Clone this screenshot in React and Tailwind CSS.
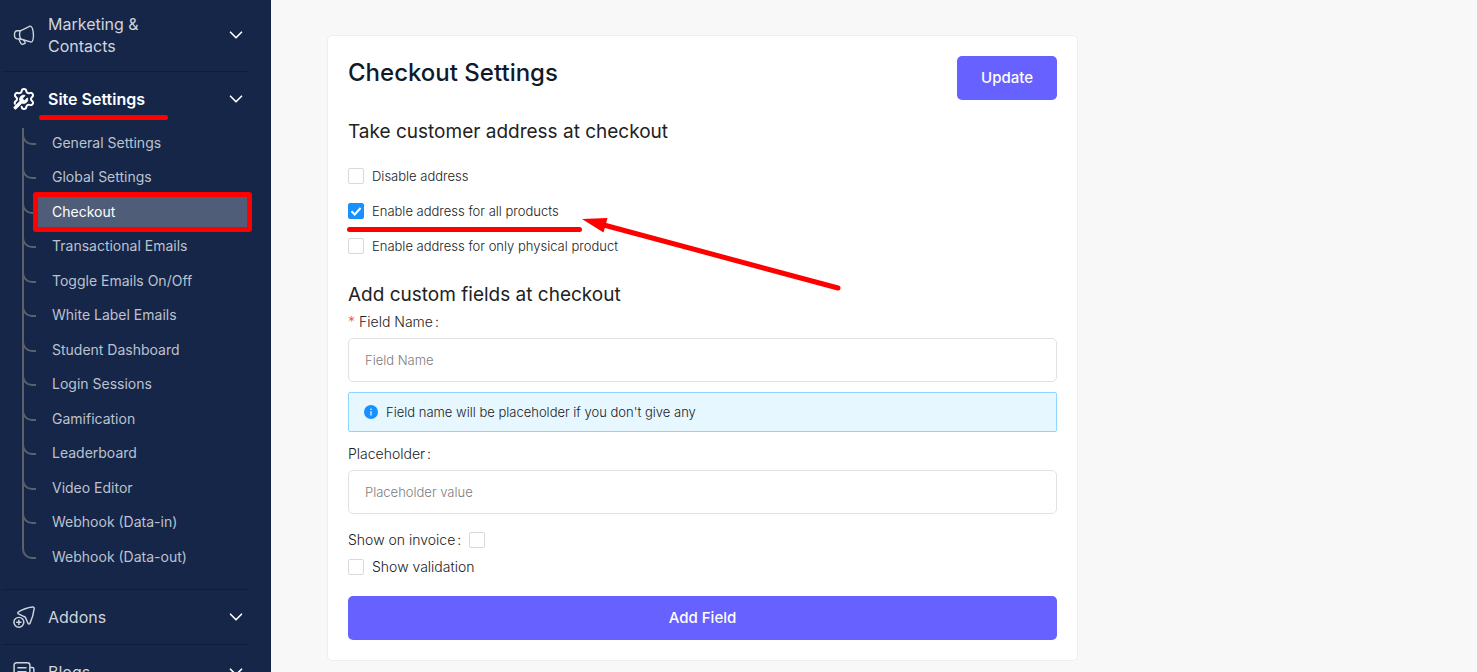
import { useState } from 'react';
import { ChevronDown } from 'lucide-react';

const SETTINGS_LINKS = [
  'General Settings',
  'Global Settings',
  'Checkout',
  'Transactional Emails',
  'Toggle Emails On/Off',
  'White Label Emails',
  'Student Dashboard',
  'Login Sessions',
  'Gamification',
  'Leaderboard',
  'Video Editor',
  'Webhook (Data-in)',
  'Webhook (Data-out)'
];

const ADDRESS_OPTIONS = [
  { id: 'disable', label: 'Disable address' },
  { id: 'all', label: 'Enable address for all products' },
  { id: 'physical', label: 'Enable address for only physical product' }
];

const iconProps = {
  viewBox: '0 0 24 24',
  fill: 'none',
  stroke: 'currentColor',
  strokeLinecap: 'round',
  strokeLinejoin: 'round',
  'aria-hidden': true
};

const MegaphoneIcon = () => (
  <svg {...iconProps} strokeWidth={1.5} className="size-[22px] shrink-0">
    <path d="M8 7.4 18.6 2.4C20.8 1.8 22.2 7 22.3 11.6c.1 4.4-.8 8.2-2.4 8.2L8.4 16.4" />
    <path d="M8 7.4H4.8C2.9 7.4 1.6 9.2 1.6 11.8s1.3 4.4 3.2 4.4L8.4 16.4C7 13.8 6.9 10.2 8 7.4Z" />
    <path d="M6.4 16.4 8.2 20.4c.6 1.3 1.7 2 2.9 1.6l1.4-.5c.8-.3 1-1.2.5-1.9l-1.6-2.2" />
  </svg>
);

const SettingsIcon = () => (
  <svg {...iconProps} viewBox="1 1 22 22" strokeWidth={2} className="size-[22px] shrink-0">
    <path d="M2.9 16.8A2.34 2.34 0 0 1 4.02 13.915a2.34 2.34 0 0 0 0-3.831A2.34 2.34 0 0 1 6.35 6.051a2.34 2.34 0 0 0 3.319-1.915a2.34 2.34 0 0 1 4.659 0 2.34 2.34 0 0 0 3.319 1.915 2.34 2.34 0 0 1 2.33 4.033 2.34 2.34 0 0 0 0 3.831 2.34 2.34 0 0 1-2.33 4.033 2.34 2.34 0 0 0-3.319 1.915 2.34 2.34 0 0 1-4.659 0" />
    <path
      fill="currentColor"
      strokeWidth={1}
      transform="translate(0.5 6.7) scale(0.7)"
      d="M14.7 6.3a1 1 0 0 0 0 1.4l1.6 1.6a1 1 0 0 0 1.4 0l3.106-3.105c.32-.322.863-.22.983.218a6 6 0 0 1-8.259 7.057l-7.91 7.91a1 1 0 0 1-2.999-3l7.91-7.91a6 6 0 0 1 7.057-8.259c.438.12.54.662.219.984z"
    />
  </svg>
);

const AddonsIcon = () => (
  <svg {...iconProps} strokeWidth={1.6} className="size-[22px] shrink-0">
    <path d="M6 8.6C5 8 5 7 6 6.4 10.6 3.4 16 1.6 21.4 1c1.1-.1 1.8.6 1.7 1.7-.6 5.8-2.4 11.5-4.6 16.3-.5 1-1.6 1-2.1 0L14 13.4c-.4-.9-1-1.5-1.9-1.9Z" />
    <circle cx="6.4" cy="17.8" r="5.4" />
    <path d="M6.4 15.4v4.8M4 17.8h4.8" />
  </svg>
);

const BlogsIcon = () => (
  <svg {...iconProps} strokeWidth={1.6} className="size-[22px] shrink-0">
    <path d="M18.4 20.4V4.4c0-1.6-1-2.6-2.6-2.6H4C2.4 1.8 1.2 3 1.2 4.6v14.8c0 1.5 1 2.6 2.6 2.6h16.8c1.3 0 2.2-1 2.2-2.2V9c0-1-.8-1.8-1.8-1.8h-2.6" />
    <path d="M5.4 7.4h8.8M5.4 11.6h8.8M5.4 15.8h5" />
  </svg>
);

const MenuRow = ({ icon, label, active = false, className = 'py-4' }) => (
  <button
    type="button"
    className={`flex w-full items-center pl-[11px] pr-0.5 text-left ${active ? 'font-semibold text-white' : 'text-[#d0d4dc]'} ${className}`}
  >
    {icon}
    <span className="relative ml-[13px] max-w-[120px] text-[16px] leading-[22px]">
      {label}
      {active && <span className="absolute -left-[9px] top-[27px] h-[5px] w-[129px] rounded-full bg-[#ff0000]" />}
    </span>
    <ChevronDown className="ml-auto size-[22px] shrink-0 text-white" strokeWidth={1.8} />
  </button>
);

const SubMenu = () => (
  <ul className="ml-5 mt-0.5 grid min-h-[448px] auto-rows-fr">
    {SETTINGS_LINKS.map((name, index) => {
      const current = name === 'Checkout';
      const last = index === SETTINGS_LINKS.length - 1;
      return (
        <li
          key={name}
          className={`flex items-start border-l-2 ${last ? 'border-transparent' : 'border-[#5b606b]'}`}
        >
          <span className="-ml-0.5 h-[17px] w-3.5 shrink-0 rounded-bl-[10px] border-b-2 border-l-2 border-[#5b606b]" />
          <a
            href="#"
            className={`relative mx-0.5 flex-1 pl-3.5 text-[14px] leading-[30px] ${current ? 'bg-[#505d78] text-white' : 'text-[#bcc2ce]'}`}
          >
            {name}
            {current && <span className="absolute -inset-[5px] rounded-[3px] border-[5px] border-[#ff0000]" />}
          </a>
        </li>
      );
    })}
  </ul>
);

const Sidebar = () => (
  <aside className="w-[271px] shrink-0 bg-[#152649] pl-0.5 pr-[22px]">
    <nav className="divide-y divide-[#101d3b]">
      <MenuRow icon={<MegaphoneIcon />} label="Marketing & Contacts" className="pb-3.5 pt-[13px]" />
      <div className="pb-[13px]">
        <MenuRow icon={<SettingsIcon />} label="Site Settings" active />
        <SubMenu />
      </div>
      <MenuRow icon={<AddonsIcon />} label="Addons" />
      <MenuRow icon={<BlogsIcon />} label="Blogs" />
    </nav>
  </aside>
);

const Checkbox = ({ id, checked, onChange }) => (
  <span className="grid size-4 shrink-0">
    <input
      id={id}
      type="checkbox"
      checked={checked}
      onChange={onChange}
      className="peer col-start-1 row-start-1 size-4 appearance-none rounded-[2px] border border-[#d9d9d9] bg-white checked:border-[#1890ff] checked:bg-[#1890ff]"
    />
    <svg
      viewBox="0 0 16 16"
      fill="none"
      stroke="white"
      strokeWidth={2}
      className="pointer-events-none invisible col-start-1 row-start-1 size-4 peer-checked:visible"
      aria-hidden="true"
    >
      <path d="M3.5 8.3 6.7 11.5 12.6 5" />
    </svg>
  </span>
);

const inputClass =
  'mt-[5px] block h-11 w-full rounded-[5px] border border-[#e2e2e4] bg-white px-4 text-[13px] font-light text-gray-800 placeholder:text-[#7d7d7d]';
const buttonClass = 'h-11 rounded-[5px] bg-[#6661ff] text-[15px] font-medium text-white';

// 手绘箭头标注，指向当前选中的选项
const ArrowMark = () => (
  <>
    <span className="absolute -left-px top-[26px] h-[5px] w-[235px] rounded-full bg-[#ff0000]" />
    <svg
      viewBox="0 0 260 76"
      className="pointer-events-none absolute left-[234px] top-[17px] h-[76px] w-[260px]"
      aria-hidden="true"
    >
      <path d="M0 1 25.5 0 21.5 14.5Z" fill="#ff0000" />
      <path d="M20 6.5 256 70" stroke="#ff0000" strokeWidth={5} strokeLinecap="round" />
    </svg>
  </>
);

const CheckoutSettings = () => {
  const [address, setAddress] = useState('all');
  const [onInvoice, setOnInvoice] = useState(false);
  const [validation, setValidation] = useState(false);

  return (
    <section className="w-full max-w-[751px] rounded-[5px] border border-[#eeeef2] bg-white p-5">
      <div className="flex items-start justify-between">
        <h1 className="text-[24px] font-medium leading-[34px] text-[#0f1b2d]">Checkout Settings</h1>
        <button type="button" className={`w-[100px] ${buttonClass}`}>
          Update
        </button>
      </div>

      <h2 className="mt-4 text-[19px] leading-8 text-[#222222]">Take customer address at checkout</h2>
      <div className="mt-[18px] flex flex-col gap-[15px]">
        {ADDRESS_OPTIONS.map((option) => (
          <div key={option.id} className="relative flex items-center gap-2">
            <Checkbox
              id={option.id}
              checked={address === option.id}
              onChange={() => setAddress(option.id)}
            />
            <label htmlFor={option.id} className="text-[13px] font-light leading-5">
              {option.label}
            </label>
            {option.id === 'all' && <ArrowMark />}
          </div>
        ))}
      </div>

      <h2 className="mt-[23px] text-[19px] leading-8 text-[#222222]">Add custom fields at checkout</h2>
      <label htmlFor="fieldName" className="flex gap-1 text-[14px] font-light leading-[22px]">
        <span className="text-[#ff4d4f]">*</span>
        <span>
          Field Name<span className="ml-0.5">:</span>
        </span>
      </label>
      <input id="fieldName" type="text" placeholder="Field Name" className={inputClass} />

      <div className="mt-2.5 flex h-10 items-center gap-2 rounded-[2px] border border-[#91d5ff] bg-[#e6f7ff] px-[15px]">
        <svg viewBox="0 0 14 14" className="size-3.5 shrink-0" aria-hidden="true">
          <circle cx="7" cy="7" r="7" fill="#1890ff" />
          <path d="M7 6.2v4.3" stroke="white" strokeWidth={1.2} />
          <circle cx="7" cy="4.2" r="0.8" fill="white" />
        </svg>
        <p className="text-[13px] font-light leading-[22px]">Field name will be placeholder if you don't give any</p>
      </div>

      <label htmlFor="placeholderValue" className="mt-[11px] block text-[14px] font-light leading-[22px]">
        Placeholder<span className="ml-0.5">:</span>
      </label>
      <input id="placeholderValue" type="text" placeholder="Placeholder value" className={inputClass} />

      <div className="mt-[15px] flex items-center gap-2 text-[14px] font-light leading-[22px]">
        <label htmlFor="onInvoice">
          Show on invoice<span className="ml-0.5">:</span>
        </label>
        <Checkbox id="onInvoice" checked={onInvoice} onChange={(e) => setOnInvoice(e.target.checked)} />
      </div>
      <div className="mt-[5px] flex items-center gap-2 text-[14px] font-light leading-[22px]">
        <Checkbox id="validation" checked={validation} onChange={(e) => setValidation(e.target.checked)} />
        <label htmlFor="validation">Show validation</label>
      </div>

      <button type="button" className={`mt-[18px] w-full ${buttonClass}`}>
        Add Field
      </button>
    </section>
  );
};

const App = () => (
  <div className="flex h-screen overflow-hidden bg-[#f8f8f8] font-['Inter',sans-serif] text-[#222222]">
    <Sidebar />
    <main className="flex-1 px-14 pt-[35px]">
      <CheckoutSettings />
    </main>
  </div>
);

export default App;
